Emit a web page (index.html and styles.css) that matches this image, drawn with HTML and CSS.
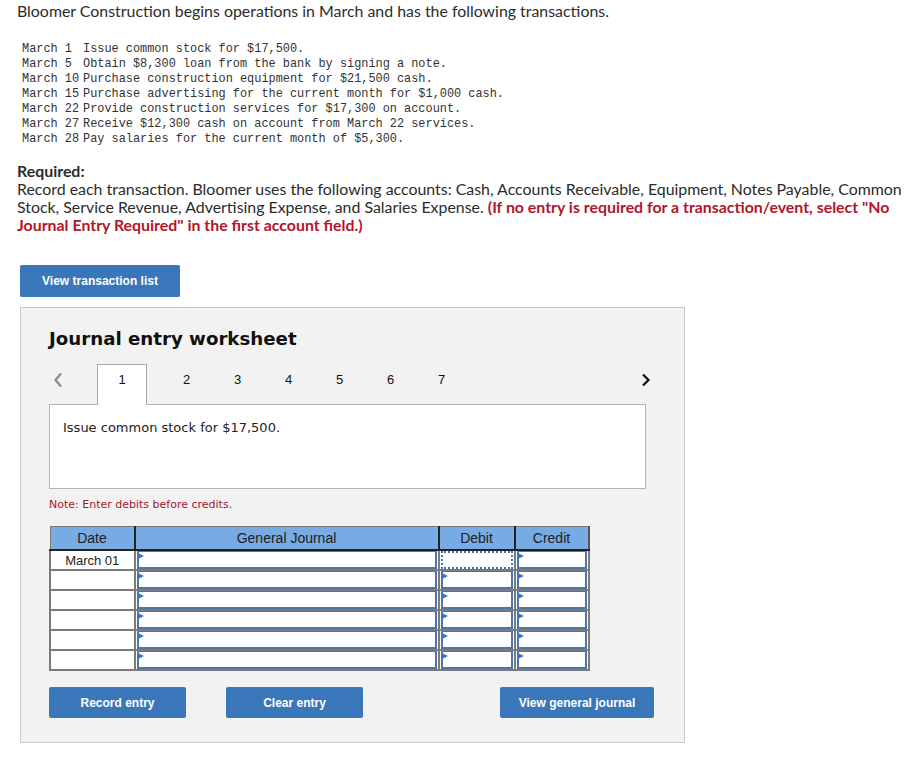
FILE: index.html
```html
<!DOCTYPE html>
<html>
<head>
    <title>Journal entry worksheet</title>
    <link rel="stylesheet" href="styles.css">
</head>
<body>
    <p class="intro">Bloomer Construction begins operations in March and has the following transactions.</p>

    <table class="transactions">
        <tr><td>March 1</td><td>Issue common stock for $17,500.</td></tr>
        <tr><td>March 5</td><td>Obtain $8,300 loan from the bank by signing a note.</td></tr>
        <tr><td>March 10</td><td>Purchase construction equipment for $21,500 cash.</td></tr>
        <tr><td>March 15</td><td>Purchase advertising for the current month for $1,000 cash.</td></tr>
        <tr><td>March 22</td><td>Provide construction services for $17,300 on account.</td></tr>
        <tr><td>March 27</td><td>Receive $12,300 cash on account from March 22 services.</td></tr>
        <tr><td>March 28</td><td>Pay salaries for the current month of $5,300.</td></tr>
    </table>

    <div class="required">
        <strong>Required:</strong>
        <p>Record each transaction. Bloomer uses the following accounts: Cash, Accounts Receivable, Equipment, Notes Payable, Common Stock, Service Revenue, Advertising Expense, and Salaries Expense. <span class="hint">(If no entry is required for a transaction/event, select "No Journal Entry Required" in the first account field.)</span></p>
    </div>

    <button class="btn btn-list">View transaction list</button>

    <div class="worksheet">
        <h2>Journal entry worksheet</h2>

        <div class="tabs">
            <span class="arrow arrow-prev">
                <svg width="10" height="16" viewBox="0 0 10 16"><path d="M8 1.5 L2.5 8 L8 14.5" fill="none" stroke="#8a8a8a" stroke-width="2.2"/></svg>
            </span>
            <span class="tab active">1</span>
            <span class="tab">2</span>
            <span class="tab">3</span>
            <span class="tab">4</span>
            <span class="tab">5</span>
            <span class="tab">6</span>
            <span class="tab">7</span>
            <span class="arrow arrow-next">
                <svg width="10" height="16" viewBox="0 0 10 16"><path d="M2 2.5 L7.5 8 L2 13.5" fill="none" stroke="#111" stroke-width="2.2"/></svg>
            </span>
        </div>

        <div class="description">Issue common stock for $17,500.</div>

        <p class="note">Note: Enter debits before credits.</p>

        <table class="journal">
            <thead>
                <tr>
                    <th class="col-date">Date</th>
                    <th class="col-account">General Journal</th>
                    <th class="col-debit">Debit</th>
                    <th class="col-credit">Credit</th>
                </tr>
            </thead>
            <tbody>
                <tr>
                    <td class="date">March 01</td>
                    <td><div class="field"></div></td>
                    <td><div class="field focused"></div></td>
                    <td><div class="field"></div></td>
                </tr>
                <tr>
                    <td class="date"></td>
                    <td><div class="field"></div></td>
                    <td><div class="field"></div></td>
                    <td><div class="field"></div></td>
                </tr>
                <tr>
                    <td class="date"></td>
                    <td><div class="field"></div></td>
                    <td><div class="field"></div></td>
                    <td><div class="field"></div></td>
                </tr>
                <tr>
                    <td class="date"></td>
                    <td><div class="field"></div></td>
                    <td><div class="field"></div></td>
                    <td><div class="field"></div></td>
                </tr>
                <tr>
                    <td class="date"></td>
                    <td><div class="field"></div></td>
                    <td><div class="field"></div></td>
                    <td><div class="field"></div></td>
                </tr>
                <tr>
                    <td class="date"></td>
                    <td><div class="field"></div></td>
                    <td><div class="field"></div></td>
                    <td><div class="field"></div></td>
                </tr>
            </tbody>
        </table>

        <div class="actions">
            <button class="btn btn-record">Record entry</button>
            <button class="btn btn-clear">Clear entry</button>
            <button class="btn btn-journal">View general journal</button>
        </div>
    </div>
</body>
</html>
```

FILE: styles.css
```css
body { margin: 0; padding: 2px 4px 0 17px; font-family: Lato, "Open Sans", sans-serif; font-size: 15.9px; color: #2b2b2b; }
p { margin: 0; }

.intro { line-height: 18px; }

.transactions { margin: 22px 0 0 5px; border-collapse: collapse; font-family: "Liberation Mono", monospace; font-size: 11.9px; color: #333; }
.transactions td { padding: 0; height: 15px; line-height: 15px; white-space: pre; }
.transactions td:first-child { width: 61px; }

.required { margin-top: 15px; line-height: 18px; }
.required strong { display: block; }
.hint { color: #b1162a; font-weight: bold; }

.btn { border: none; border-radius: 2px; background: #3a77ba; color: #fff; font-family: "Liberation Sans", Arial, sans-serif; font-weight: bold; font-size: 12px; cursor: pointer; }
.btn-list { display: block; margin: 31px 0 0 3px; width: 160px; height: 32px; }

.worksheet { margin: 10px 0 0 3px; width: 625px; padding: 16px 10px 24px 28px; background: #f2f2f2; border: 1px solid #c9c9c9; }
.worksheet h2 { margin: 0; font-family: "DejaVu Sans", Verdana, sans-serif; font-size: 18.2px; line-height: 30px; color: #111; }

.tabs { display: flex; align-items: stretch; margin-top: 10px; height: 40px; }
.tab { width: 51px; display: flex; justify-content: center; padding-top: 8px; font-family: "Liberation Sans", Arial, sans-serif; font-size: 13px; line-height: 15px; color: #111; box-sizing: border-box; }
.tab.active { width: 50px; margin-right: 14px; background: #fff; border: 1px solid #a7a7a7; border-bottom: none; position: relative; z-index: 1; margin-bottom: -1px; height: 41px; padding-top: 7px; }
.arrow { display: flex; padding-top: 8px; box-sizing: border-box; }
.arrow-prev { width: 48px; padding-left: 4px; }
.arrow-next { margin-left: auto; margin-right: 23px; }

.description { width: 582px; height: 68px; padding: 15px 0 0 13px; background: #fff; border: 1px solid #b5b5b5; font-family: "DejaVu Sans", Verdana, sans-serif; font-size: 13px; line-height: 16px; color: #222; }

.note { margin-top: 9px; font-family: "DejaVu Sans", Verdana, sans-serif; font-size: 11px; line-height: 14px; color: #a3172d; }

.journal { margin-top: 14px; border-collapse: collapse; font-family: "Liberation Sans", Arial, sans-serif; font-size: 14px; }
.journal th { height: 22px; padding: 0; background: #78abe3; color: #1e1e1e; font-weight: normal; border: 1px solid #777; border-bottom: 2px solid #222; border-right: 2px solid #222; }
.journal th:last-child { border-right: 2px solid #555; }
.col-date { width: 83px; }
.col-account { width: 302px; }
.col-debit { width: 74px; }
.col-credit { width: 72px; }
.journal td { height: 18px; padding: 0; background: #fff; border: 2px solid #7b7b7b; border-top-width: 0; border-bottom-width: 2px; }
.journal td.date { text-align: center; color: #222; font-size: 13px; border-width: 0 1px 2px 2px; }
.field { height: 15px; margin: 0 1px; border: 2px solid #4d75a6; border-top-width: 1px; position: relative; }
.field::before { content: ""; position: absolute; left: -1px; top: 1px; border-left: 6px solid #3b78c2; border-top: 3.5px solid transparent; border-bottom: 3.5px solid transparent; }
.field.focused { border: 2px dotted #3b78c2; height: 14px; }
.field.focused::before { display: none; }

.actions { display: flex; margin-top: 16px; width: 605px; }
.btn-record, .btn-clear { width: 137px; height: 31px; margin-right: 40px; }
.btn-journal { width: 154px; height: 31px; margin-left: auto; }
```
